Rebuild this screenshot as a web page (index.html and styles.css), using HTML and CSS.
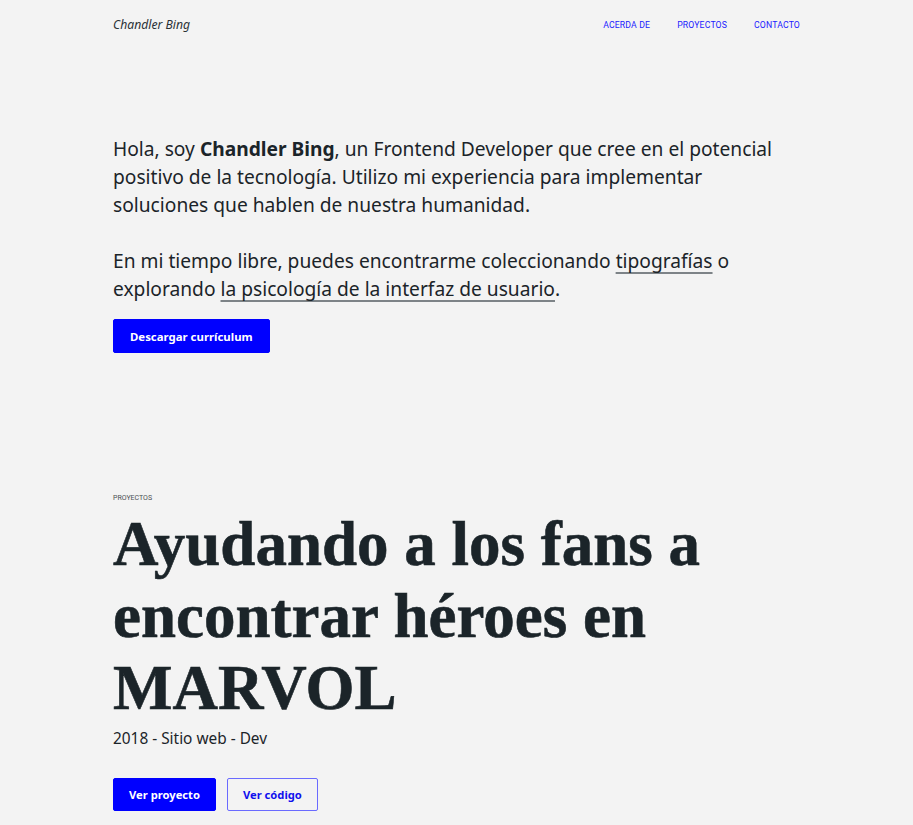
FILE: index.html
```html
<!DOCTYPE html>
<html lang="es">
<head>
<meta charset="utf-8">
<title>Chandler Bing</title>
<link rel="stylesheet" href="styles.css">
</head>
<body>
<div class="container">
  <header class="header">
    <span class="logo">Chandler Bing</span>
    <nav class="nav">
      <a href="#">ACERDA DE</a>
      <a href="#">PROYECTOS</a>
      <a href="#">CONTACTO</a>
    </nav>
  </header>
  <section class="hero">
    <p>Hola, soy <strong>Chandler Bing</strong>, un Frontend Developer que cree en el potencial positivo de la tecnología. Utilizo mi experiencia para implementar soluciones que hablen de nuestra humanidad.</p>
    <p>En mi tiempo libre, puedes encontrarme coleccionando <a class="ul" href="#">tipografías</a> o explorando <a class="ul" href="#">la psicología de la interfaz de usuario</a>.</p>
    <a class="btn btn-solid" href="#">Descargar currículum</a>
  </section>
  <section class="project">
    <div class="label">PROYECTOS</div>
    <h1 class="title">Ayudando a los fans a encontrar héroes en MARVOL</h1>
    <div class="meta">2018 - Sitio web - Dev</div>
    <div class="actions">
      <a class="btn btn-solid" href="#">Ver proyecto</a>
      <a class="btn btn-outline" href="#">Ver código</a>
    </div>
  </section>
</div>
</body>
</html>
```
FILE: styles.css
```css
html, body { margin: 0; padding: 0; }
body {
  background: #f3f3f3;
  color: #1b2429;
  font-family: "Noto Sans", sans-serif;
}
.container {
  width: 687px;
  margin: 0 auto;
}
.header {
  height: 49px;
  display: flex;
  align-items: center;
  justify-content: space-between;
}
.logo {
  font-family: "Noto Sans", sans-serif;
  font-style: italic;
  font-size: 12.2px;
  color: #2a3136;
}
.nav {
  display: flex;
  gap: 27px;
}
.nav a {
  font-family: Roboto, sans-serif;
  font-size: 8.7px;
  letter-spacing: 0.15px;
  color: #2020ff;
  text-decoration: none;
}
.hero {
  padding-top: 86px;
}
.hero p {
  margin: 0 0 28px;
  font-size: 19.2px;
  line-height: 28px;
}
.hero p:nth-of-type(2) { margin-bottom: 16px; }
.hero strong { font-weight: 700; }
.ul {
  color: inherit;
  text-decoration: underline;
  text-decoration-color: #7d8387;
  text-decoration-thickness: 2px;
  text-underline-offset: 4px;
  text-decoration-skip-ink: none;
}
.btn {
  display: inline-flex;
  align-items: center;
  justify-content: center;
  box-sizing: border-box;
  height: 34px;
  padding: 0 16px;
  border-radius: 2px;
  font-family: "Noto Sans", sans-serif;
  font-weight: 700;
  font-size: 11.4px;
  text-decoration: none;
}
.btn-solid {
  background: #0000ff;
  color: #fff;
  border: 1px solid #0000ff;
}
.btn-outline {
  background: transparent;
  color: #1010ee;
  border: 1px solid #6a6aff;
}
.project {
  padding-top: 140px;
}
.label {
  font-family: Roboto, sans-serif;
  font-size: 7px;
  line-height: 10px;
  color: #4a4f52;
}
.title {
  margin: 5px 0 0;
  font-family: "Liberation Serif", serif;
  font-weight: 700;
  font-size: 63px;
  line-height: 72px;
  color: #1b2429;
  -webkit-text-stroke: 0.6px #1b2429;
  width: 620px;
}
.meta {
  margin-top: 4px;
  font-size: 15.4px;
  line-height: 22px;
}
.actions {
  margin-top: 28px;
  display: flex;
  gap: 11px;
}
.actions .btn {
  height: 33px;
  padding: 0 15px;
  font-size: 11.2px;
}
```
